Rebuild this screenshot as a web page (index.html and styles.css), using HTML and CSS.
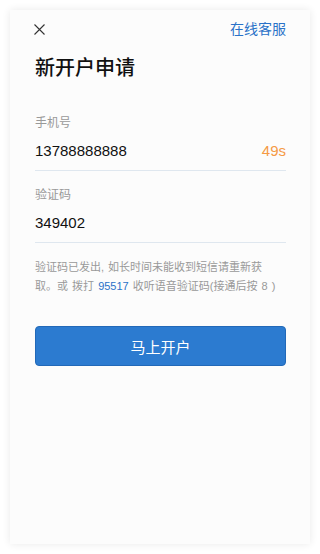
FILE: index.html
```html
<!DOCTYPE html>
<html lang="zh">
<head>
<meta charset="utf-8">
<title>新开户申请</title>
<link rel="stylesheet" href="styles.css">
</head>
<body>
<div class="card">
  <div class="header">
    <svg class="close" width="11" height="11" viewBox="0 0 11 11"><path d="M0.5 0.5L10.5 10.5M10.5 0.5L0.5 10.5" stroke="#333" stroke-width="1.1" fill="none"/></svg>
    <span class="service">在线客服</span>
  </div>
  <h1 class="title">新开户申请</h1>
  <div class="field">
    <div class="label">手机号</div>
    <div class="input-row">
      <span class="value">13788888888</span>
      <span class="countdown">49s</span>
    </div>
  </div>
  <div class="field field-second">
    <div class="label">验证码</div>
    <div class="input-row">
      <span class="value">349402</span>
    </div>
  </div>
  <p class="help">验证码已发出, 如长时间未能收到短信请重新获<br>取。或 拨打 <span class="phone">95517</span> 收听语音验证码(接通后按 8 )</p>
  <button class="submit">马上开户</button>
</div>
</body>
</html>
```
FILE: styles.css
```css
html, body {
  margin: 0;
  padding: 0;
  background: #ffffff;
}
body {
  font-family: "Liberation Sans", "Noto Sans CJK SC", sans-serif;
  padding: 10px;
  box-sizing: border-box;
}
.card {
  width: 300px;
  height: 534px;
  box-sizing: border-box;
  background: #fcfcfc;
  box-shadow: 0 0 8px rgba(0, 0, 0, 0.09);
  padding: 0 24px 0 25px;
}
.header {
  height: 38px;
  display: flex;
  align-items: center;
  justify-content: space-between;
}
.close {
  display: block;
  margin-left: -1px;
}
.service {
  color: #2a72c8;
  font-size: 14px;
  line-height: 20px;
}
.title {
  margin: 6px 0 0;
  font-size: 20px;
  line-height: 28px;
  font-weight: 500;
  color: #111;
}
.field {
  margin-top: 32px;
}
.field-second {
  margin-top: 15px;
}
.label {
  font-size: 12px;
  line-height: 18px;
  color: #999;
}
.input-row {
  margin-top: 9px;
  display: flex;
  justify-content: space-between;
  align-items: center;
  height: 20px;
  padding-bottom: 9px;
  border-bottom: 1px solid #dfe7ef;
}
.value {
  font-size: 15px;
  color: #111;
  line-height: 20px;
}
.countdown {
  font-size: 15px;
  color: #f59a45;
  line-height: 20px;
}
.help {
  margin: 15px 0 0;
  font-size: 11px;
  line-height: 19px;
  color: #999;
  word-spacing: 1px;
}
.phone {
  color: #2a72c8;
}
.submit {
  display: block;
  width: 100%;
  height: 40px;
  margin-top: 30px;
  border: 1px solid #2269b8;
  border-radius: 4px;
  background: #2c7bd0;
  color: #fff;
  font-family: "Noto Sans CJK SC", sans-serif;
  font-size: 15px;
}
```
